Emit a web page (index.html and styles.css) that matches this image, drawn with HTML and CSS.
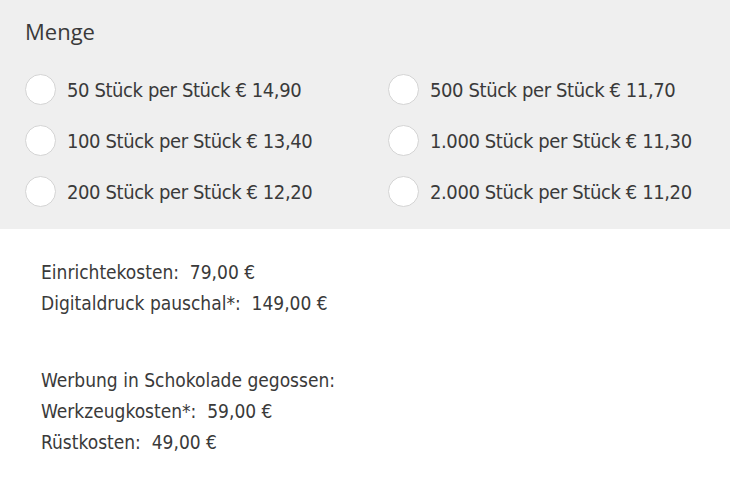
FILE: index.html
```html
<!DOCTYPE html>
<html lang="de">
<head>
<meta charset="UTF-8">
<meta name="viewport" content="width=device-width, initial-scale=1.0">
<title>Menge</title>
<link rel="stylesheet" href="styles.css">
</head>
<body>
<div class="qty-box">
    <h2 class="qty-title">Menge</h2>
    <div class="qty-options">
        <label class="qty-option"><input type="radio" name="qty" value="50"><span>50 Stück per Stück € 14,90</span></label>
        <label class="qty-option"><input type="radio" name="qty" value="500"><span>500 Stück per Stück € 11,70</span></label>
        <label class="qty-option"><input type="radio" name="qty" value="100"><span>100 Stück per Stück € 13,40</span></label>
        <label class="qty-option"><input type="radio" name="qty" value="1000"><span>1.000 Stück per Stück € 11,30</span></label>
        <label class="qty-option"><input type="radio" name="qty" value="200"><span>200 Stück per Stück € 12,20</span></label>
        <label class="qty-option"><input type="radio" name="qty" value="2000"><span>2.000 Stück per Stück € 11,20</span></label>
    </div>
</div>
<div class="costs">
    <p>Einrichtekosten:&nbsp; 79,00 €<br>Digitaldruck pauschal*:&nbsp; 149,00 €</p>
    <p>Werbung in Schokolade gegossen:<br>Werkzeugkosten*:&nbsp; 59,00 €<br>Rüstkosten:&nbsp; 49,00 €</p>
</div>
</body>
</html>
```

FILE: styles.css
```css
body {
    margin: 0;
    padding: 0;
    background-color: #fff;
    color: #3a3a3a;
    font-family: "Liberation Sans Narrow", "DejaVu Sans", sans-serif;
    font-stretch: condensed;
}
.qty-box {
    background-color: #efefef;
    padding: 17px 25px 22px 25px;
}
.qty-title {
    font-family: "Open Sans", sans-serif;
    font-stretch: normal;
    font-weight: normal;
    font-size: 22px;
    margin: 0 0 29px 0;
    line-height: 28px;
}
.qty-options {
    display: grid;
    grid-template-columns: 363px 1fr;
    row-gap: 20px;
}
.qty-option {
    display: flex;
    align-items: center;
    font-size: 20px;
    letter-spacing: -0.4px;
    white-space: nowrap;
    cursor: pointer;
}
.qty-option input {
    appearance: none;
    -webkit-appearance: none;
    flex: none;
    width: 31px;
    height: 31px;
    margin: 0 11px 0 0;
    border: 1px solid #d4d4d4;
    border-radius: 50%;
    background-color: #fff;
}
.qty-option input:checked {
    background-color: #3a3a3a;
    box-shadow: inset 0 0 0 6px #fff;
}
.costs {
    padding: 28px 41px 16px 41px;
    font-size: 19px;
    line-height: 31px;
}
.costs p {
    margin: 0 0 46px 0;
}
.costs p:last-child {
    margin-bottom: 0;
}
```
